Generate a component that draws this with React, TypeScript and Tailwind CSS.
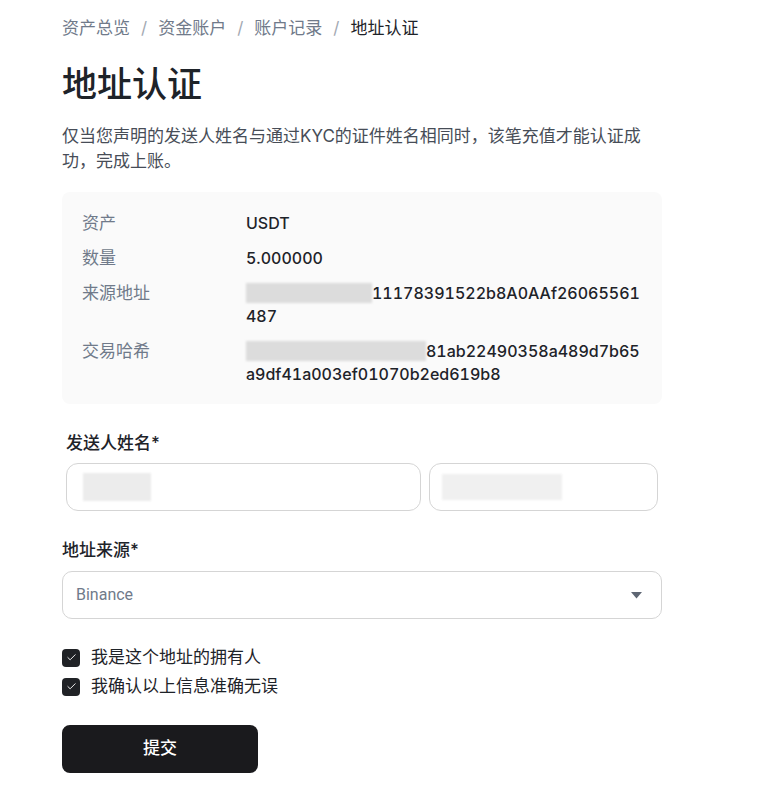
import { Check } from 'lucide-react';

const font = { fontFamily: 'Inter, "Noto Sans CJK SC", sans-serif' };

function Redacted({ w, h = 20 }: { w: number; h?: number }) {
  return (
    <span
      className="inline-block align-[-4px] bg-[#dcdcdc] blur-[1px]"
      style={{ width: w, height: h }}
    />
  );
}

function InfoRow({ label, children }: { label: string; children: React.ReactNode }) {
  return (
    <div className="flex leading-[23px]">
      <div className="w-[164px] shrink-0 text-[17px] text-[#707a8a]">{label}</div>
      <div className="w-[400px] break-all text-[16px] font-medium tabular-nums text-[#1e2329]">{children}</div>
    </div>
  );
}

function CheckRow({ text }: { text: string }) {
  return (
    <label className="flex items-center gap-[11px] text-[17px] leading-[29px] text-[#1e2329]">
      <span className="w-[18px] h-[18px] rounded-[4px] bg-[#202226] flex items-center justify-center">
        <Check size={11} strokeWidth={2} className="text-white" />
      </span>
      {text}
    </label>
  );
}

export default function App() {
  return (
    <div className="min-h-screen bg-white" style={font}>
      <div className="w-[600px] ml-[62px] pt-4 pb-7">
        {/* Breadcrumb */}
        <nav className="flex items-center gap-[11px] text-[17px] leading-6 text-[#707a8a]">
          <span>资产总览</span>
          <span className="text-[#a3a9b3]">/</span>
          <span>资金账户</span>
          <span className="text-[#a3a9b3]">/</span>
          <span>账户记录</span>
          <span className="text-[#a3a9b3]">/</span>
          <span className="text-[#1e2329]">地址认证</span>
        </nav>

        <h1 className="mt-[21px] text-[35px] leading-[46px] font-medium text-[#1e2329]">地址认证</h1>

        <p className="mt-[17px] w-[585px] text-[17px] leading-[25px] text-[#474d57]">
          仅当您声明的发送人姓名与通过KYC的证件姓名相同时，该笔充值才能认证成功，完成上账。
        </p>

        {/* Summary card */}
        <div className="mt-[18px] bg-[#fafafa] rounded-lg px-5 pt-5 pb-[18px] flex flex-col gap-3">
          <InfoRow label="资产">USDT</InfoRow>
          <InfoRow label="数量">5.000000</InfoRow>
          <InfoRow label="来源地址">
            <Redacted w={126} />
            11178391522b8A0AAf26065561487
          </InfoRow>
          <InfoRow label="交易哈希">
            <Redacted w={180} />
            81ab22490358a489d7b65a9df41a003ef01070b2ed619b8
          </InfoRow>
        </div>

        {/* Sender name */}
        <div className="mt-[27px] px-1">
          <div className="text-[17px] leading-6 font-medium text-[#1e2329]">发送人姓名*</div>
          <div className="mt-2 flex gap-2">
            <div className="w-[355px] h-[48px] rounded-xl border border-[#d5d5d5] px-4 flex items-center">
              <span className="w-[68px] h-[28px] bg-[#ececec] blur-[1px]" />
            </div>
            <div className="w-[229px] h-[48px] rounded-xl border border-[#d5d5d5] px-3 flex items-center">
              <span className="w-[120px] h-[26px] bg-[#f0f0f0] blur-[1px]" />
            </div>
          </div>
        </div>

        {/* Address source */}
        <div className="mt-[27px]">
          <div className="text-[17px] leading-6 font-medium text-[#1e2329]">地址来源*</div>
          <div className="mt-[9px] h-[48px] rounded-[10px] border border-[#d5d5d5] pl-[13px] pr-[19px] flex items-center justify-between">
            <span className="text-[16px] text-[#707a8a]" style={{ fontFamily: 'Roboto, sans-serif' }}>
              Binance
            </span>
            <svg width="11" height="7" viewBox="0 0 11 7">
              <path d="M0 0 H11 L5.5 6.5 Z" fill="#5e6673" />
            </svg>
          </div>
        </div>

        {/* Checks */}
        <div className="mt-[24px] flex flex-col">
          <CheckRow text="我是这个地址的拥有人" />
          <CheckRow text="我确认以上信息准确无误" />
        </div>

        <button className="mt-[24px] w-[196px] h-[48px] rounded-lg bg-[#1a1a1d] text-white text-[17px] font-medium">
          提交
        </button>
      </div>
    </div>
  );
}
